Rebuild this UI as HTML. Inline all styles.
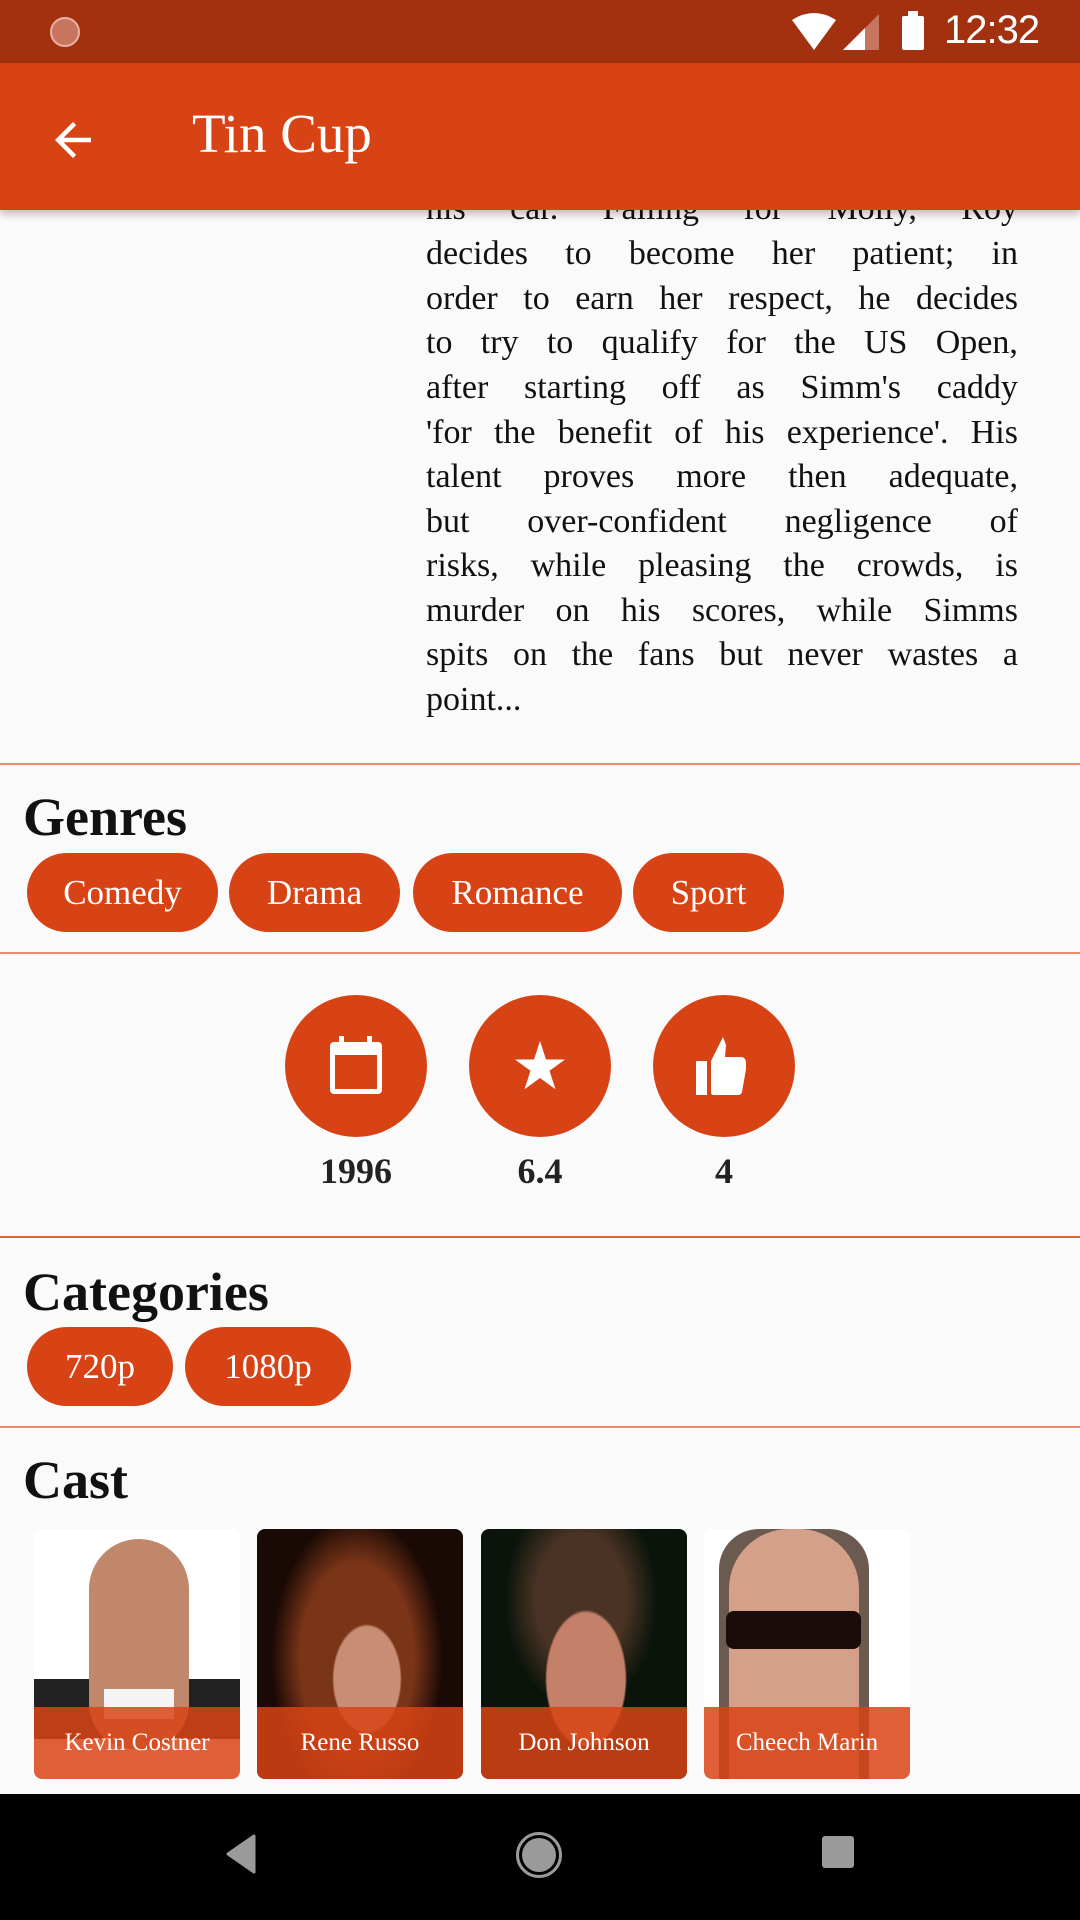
<!DOCTYPE html>
<html><head><meta charset="utf-8"><style>
*{margin:0;padding:0;box-sizing:border-box}
body{width:1080px;height:1920px;background:#fafafa;position:relative;overflow:hidden;font-family:"Liberation Serif",serif;color:#111}
.abs{position:absolute}
#status{left:0;top:0;width:1080px;height:63px;background:#a3300f}
#bar{left:0;top:63px;width:1080px;height:147px;background:#d84315;box-shadow:0 4px 8px rgba(0,0,0,.25);z-index:5}
.line{position:absolute;left:426px;width:592px;font-size:34px;display:flex;justify-content:space-between;white-space:pre}
.div{left:0;width:1080px;height:2px;background:#ec8a6c}
h2{position:absolute;left:23px;font-size:54px;font-weight:bold;line-height:1}
.chip{position:absolute;height:79px;border-radius:40px;background:#d84315;color:#fff;font-size:35px;display:flex;align-items:center;justify-content:center}
.circ{position:absolute;width:142px;height:142px;border-radius:50%;background:#d84315;top:995px}
.lab{position:absolute;top:1150px;width:160px;text-align:center;font-size:36px;font-weight:bold;color:#222}
.card{position:absolute;top:1529px;width:206px;height:250px;border-radius:8px;overflow:hidden}
.ov{position:absolute;left:0;top:178px;width:206px;height:72px;background:rgba(216,67,21,.85);color:#fff;font-size:25px;text-align:center;line-height:72px}
</style></head><body>
<div id="status" class="abs">
 <div class="abs" style="left:50px;top:17px;width:30px;height:30px;border-radius:50%;background:#c87560;border:2px solid #e6b3a5"></div>
 <svg class="abs" style="left:790px;top:12px" width="48" height="40" viewBox="0 0 48 40"><path d="M2 8 Q24 -6 46 8 L24 38 Z" fill="#fff"/></svg>
 <svg class="abs" style="left:843px;top:14px" width="36" height="36" viewBox="0 0 36 36"><path d="M0 36 L36 0 V36 Z" fill="#c87560"/><path d="M0 36 L22 14 V36 Z" fill="#fff"/></svg>
 <div class="abs" style="left:902px;top:16px;width:22px;height:34px;background:#fff;border-radius:2px"></div>
 <div class="abs" style="left:908px;top:11px;width:10px;height:6px;background:#fff"></div>
 <div class="abs" style="left:944px;top:8px;font-family:'Liberation Sans',sans-serif;font-size:40px;color:#fff;letter-spacing:-1px">12:32</div>
</div>
<div id="bar" class="abs">
 <svg class="abs" style="left:46px;top:50px" width="54" height="54" viewBox="0 0 24 24"><path d="M20 11H7.8l5.6-5.6L12 4l-8 8 8 8 1.4-1.4L7.8 13H20z" fill="#fff"/></svg>
 <div class="abs" style="left:192px;top:39px;font-size:55px;color:#fff">Tin Cup</div>
</div>
<div class="line" style="top:190px"><span>his</span><span>car.</span><span>Falling</span><span>for</span><span>Molly,</span><span>Roy</span></div>
<div class="line" style="top:235px"><span>decides</span><span>to</span><span>become</span><span>her</span><span>patient;</span><span>in</span></div>
<div class="line" style="top:280px"><span>order</span><span>to</span><span>earn</span><span>her</span><span>respect,</span><span>he</span><span>decides</span></div>
<div class="line" style="top:324px"><span>to</span><span>try</span><span>to</span><span>qualify</span><span>for</span><span>the</span><span>US</span><span>Open,</span></div>
<div class="line" style="top:369px"><span>after</span><span>starting</span><span>off</span><span>as</span><span>Simm's</span><span>caddy</span></div>
<div class="line" style="top:414px"><span>'for</span><span>the</span><span>benefit</span><span>of</span><span>his</span><span>experience'.</span><span>His</span></div>
<div class="line" style="top:458px"><span>talent</span><span>proves</span><span>more</span><span>then</span><span>adequate,</span></div>
<div class="line" style="top:503px"><span>but</span><span>over-confident</span><span>negligence</span><span>of</span></div>
<div class="line" style="top:547px"><span>risks,</span><span>while</span><span>pleasing</span><span>the</span><span>crowds,</span><span>is</span></div>
<div class="line" style="top:592px"><span>murder</span><span>on</span><span>his</span><span>scores,</span><span>while</span><span>Simms</span></div>
<div class="line" style="top:636px"><span>spits</span><span>on</span><span>the</span><span>fans</span><span>but</span><span>never</span><span>wastes</span><span>a</span></div>
<div class="line" style="top:681px;justify-content:flex-start"><span>point...</span></div>

<div class="abs div" style="top:763px"></div>
<h2 style="top:790px">Genres</h2>
<div class="chip" style="left:27px;top:853px;width:191px">Comedy</div>
<div class="chip" style="left:229px;top:853px;width:171px">Drama</div>
<div class="chip" style="left:413px;top:853px;width:209px">Romance</div>
<div class="chip" style="left:633px;top:853px;width:151px">Sport</div>
<div class="abs div" style="top:952px"></div>

<div class="circ" style="left:285px"><svg style="position:absolute;left:43px;top:41px" width="56" height="60" viewBox="0 0 56 60"><rect x="11" y="0" width="5" height="8" fill="#fff"/><rect x="39" y="0" width="5" height="8" fill="#fff"/><rect x="2" y="6" width="52" height="52" rx="4" fill="#fff"/><rect x="7" y="19" width="42" height="34" fill="#d84315"/></svg></div>
<div class="circ" style="left:469px"><svg style="position:absolute;left:41px;top:41px" width="60" height="60" viewBox="0 0 24 24"><path d="M12 2l2.4 7.4H22l-6.2 4.5 2.4 7.4L12 16.8l-6.2 4.5 2.4-7.4L2 9.4h7.6z" fill="#fff"/></svg></div>
<div class="circ" style="left:653px"><svg style="position:absolute;left:41px;top:41px" width="60" height="60" viewBox="0 0 60 60"><rect x="2" y="25" width="11" height="34" fill="#fff"/><path d="M17 25 L29 1 L32 9 L31 21 L48 21 Q52 22 52 27 L52 33 L48 56 Q47 59 44 59 L20 59 Q17 59 17 56 Z" fill="#fff"/></svg></div>
<div class="lab" style="left:276px">1996</div>
<div class="lab" style="left:460px">6.4</div>
<div class="lab" style="left:644px">4</div>
<div class="abs div" style="top:1236px;background:#e5603a"></div>

<h2 style="top:1265px">Categories</h2>
<div class="chip" style="left:27px;top:1327px;width:146px">720p</div>
<div class="chip" style="left:185px;top:1327px;width:166px">1080p</div>
<div class="abs div" style="top:1426px"></div>
<h2 style="top:1453px">Cast</h2>

<div class="card" style="left:34px;background:#fff">
 <div class="abs" style="left:0;top:150px;width:206px;height:60px;background:#222"></div>
 <div class="abs" style="left:55px;top:10px;width:100px;height:210px;background:#c0876a;border-radius:50px 50px 45px 45px"></div>
 <div class="abs" style="left:70px;top:160px;width:70px;height:30px;background:#f4f4f4"></div>
 <div class="ov">Kevin Costner</div></div>
<div class="card" style="left:257px;background:radial-gradient(ellipse 60px 95px at 110px 150px,#c88d74 55%,transparent 58%),radial-gradient(ellipse 95px 160px at 100px 130px,#7a3418 60%,#1a0a05 90%);">
 <div class="ov">Rene Russo</div></div>
<div class="card" style="left:481px;background:radial-gradient(ellipse 65px 110px at 105px 150px,#c48068 60%,transparent 63%),radial-gradient(ellipse 90px 130px at 100px 70px,#4a3325 50%,#0a140a 85%);">
 <div class="ov">Don Johnson</div></div>
<div class="card" style="left:704px;background:#fff">
 <div class="abs" style="left:15px;top:0;width:150px;height:250px;background:#6a5a50;border-radius:40px 40px 0 0"></div>
 <div class="abs" style="left:25px;top:0;width:130px;height:250px;background:#d5a08a;border-radius:60px 60px 0 0"></div>
 <div class="abs" style="left:22px;top:82px;width:135px;height:38px;background:#1a0c08;border-radius:8px"></div>
 <div class="ov">Cheech Marin</div></div>

<div class="abs" style="left:0;top:1794px;width:1080px;height:126px;background:#000">
 <svg class="abs" style="left:224px;top:40px" width="34" height="40" viewBox="0 0 34 40"><path d="M30 2 L4 20 L30 38 Z" fill="#9a9a9a" stroke="#9a9a9a" stroke-width="3" stroke-linejoin="round"/></svg>
 <div class="abs" style="left:516px;top:38px;width:46px;height:46px;border-radius:50%;border:3px solid #9a9a9a"></div>
 <div class="abs" style="left:522px;top:44px;width:34px;height:34px;border-radius:50%;background:#9a9a9a"></div>
 <div class="abs" style="left:822px;top:42px;width:32px;height:32px;border-radius:3px;background:#9a9a9a"></div>
</div>
</body></html>
